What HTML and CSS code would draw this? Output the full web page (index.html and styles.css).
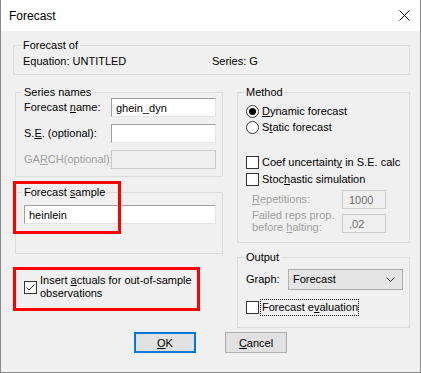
FILE: index.html
```html
<!DOCTYPE html>
<html lang="en">
<head>
    <meta charset="UTF-8">
    <title>Forecast</title>
    <link rel="stylesheet" href="styles.css">
</head>
<body>

    <div class="window">
        <div class="titlebar">
            <span class="title">Forecast</span>
            <span class="close">
                <svg width="11" height="11" viewBox="0 0 11 11"><path d="M0.5 0.5L10.5 10.5M10.5 0.5L0.5 10.5" stroke="#000" stroke-width="1"/></svg>
            </span>
        </div>

        <div class="dialog">
            <fieldset class="group group-of">
                <legend>Forecast of</legend>
                <div class="of-row">
                    <span class="of-eq">Equation: UNTITLED</span>
                    <span>Series: G</span>
                </div>
            </fieldset>

            <div class="columns">
                <div class="col">
                    <fieldset class="group names">
                        <legend>Series names</legend>
                        <div class="field">
                            <span class="field-label">Forecast <u>n</u>ame:</span>
                            <input class="edit" type="text" value="ghein_dyn">
                        </div>
                        <div class="field">
                            <span class="field-label">S.<u>E</u>. (optional):</span>
                            <input class="edit" type="text" value="">
                        </div>
                        <div class="field">
                            <span class="field-label disabled">GA<u>R</u>CH(optional):</span>
                            <input class="edit" type="text" value="" disabled>
                        </div>
                    </fieldset>

                    <fieldset class="group sample">
                        <legend>Forecast <u>s</u>ample</legend>
                        <input class="edit edit-wide" type="text" value="heinlein">
                        <span class="mark mark-sample"></span>
                    </fieldset>

                    <div class="check actuals">
                        <span class="box">
                            <svg width="11" height="11" viewBox="0 0 11 11"><path d="M1.5 5.5L4 8L9.5 2.5" fill="none" stroke="#333" stroke-width="1"/></svg>
                        </span>
                        <span>Insert <u>a</u>ctuals for out-of-sample<br>observations</span>
                        <span class="mark mark-actuals"></span>
                    </div>
                </div>

                <div class="col">
                    <fieldset class="group method">
                        <legend>Method</legend>
                        <div class="radio"><span class="dot on"></span><span><u>D</u>ynamic forecast</span></div>
                        <div class="radio"><span class="dot"></span><span>S<u>t</u>atic forecast</span></div>
                        <div class="check check-first"><span class="box"></span><span>Coef uncertaint<u>y</u> in S.E. calc</span></div>
                        <div class="check"><span class="box"></span><span>Stoc<u>h</u>astic simulation</span></div>
                        <div class="param">
                            <span class="param-label disabled"><u>R</u>epetitions:</span>
                            <input class="edit edit-small" type="text" value="1000" disabled>
                        </div>
                        <div class="param param-tall">
                            <span class="param-label disabled">Failed reps prop.<br>before <u>h</u>alting:</span>
                            <input class="edit edit-small" type="text" value=".02" disabled>
                        </div>
                    </fieldset>

                    <fieldset class="group output">
                        <legend>Output</legend>
                        <div class="graph-row">
                            <span class="graph-label">Graph:</span>
                            <div class="combo">
                                <span>Forecast</span>
                                <svg width="9" height="5" viewBox="0 0 9 5"><path d="M0.5 0.5L4.5 4.5L8.5 0.5" fill="none" stroke="#555" stroke-width="1"/></svg>
                            </div>
                        </div>
                        <div class="check check-eval"><span class="box"></span><span class="focus">Forecast e<u>v</u>aluation</span></div>
                    </fieldset>
                </div>
            </div>

            <div class="buttons">
                <button class="btn btn-default"><u>O</u>K</button>
                <button class="btn"><u>C</u>ancel</button>
            </div>
        </div>
    </div>

</body>
</html>
```

FILE: styles.css
```css
body {
    margin: 0;
    background-color: #2a2a2a;
    font-family: "Liberation Sans", Arial, sans-serif;
    font-size: 11px;
    line-height: 13px;
    color: #000;
}
u {
    text-decoration: underline;
    text-underline-offset: 1px;
}
.window {
    width: 419px;
    height: 372px;
    background: #f0f0f0;
    border: 1px solid #8a8a8a;
    border-top: none;
    box-sizing: content-box;
}
.titlebar {
    height: 31px;
    background: #fff;
    display: flex;
    align-items: center;
    justify-content: space-between;
    padding: 0 10px 0 8px;
}
.title {
    font-size: 12px;
    line-height: 16px;
}
.close {
    display: flex;
    margin-right: 0;
}
.dialog {
    padding: 8px 10px 0 12px;
}
.group {
    margin: 0;
    border: 1px solid #dcdcdc;
    min-width: 0;
}
.group legend {
    padding: 0 2px;
    margin-left: -2px;
    line-height: 12px;
}
.group-of {
    padding: 4px 8px 6px 9px;
}
.of-row {
    display: flex;
}
.of-eq {
    width: 189px;
}
.columns {
    display: grid;
    grid-template-columns: 208px 173px;
    column-gap: 14px;
    margin: 11px 0 0 2px;
    align-items: start;
}
.col {
    display: flex;
    flex-direction: column;
}
.names {
    padding: 0 6px 7px 8px;
    display: flex;
    flex-direction: column;
    gap: 7px;
}
.field {
    display: flex;
    align-items: center;
}
.field-label {
    width: 87px;
}
.disabled {
    color: #a0a0a0;
}
.edit {
    box-sizing: border-box;
    width: 105px;
    height: 19px;
    margin: 0;
    padding: 0 4px;
    font-family: inherit;
    font-size: 11px;
    color: #000;
    background: #fff;
    border: 1px solid;
    border-color: #a0a0a0 #e3e3e3 #e3e3e3 #a0a0a0;
    outline: none;
}
.edit:disabled {
    background: #f0f0f0;
    border-color: #cccccc;
    color: #6d6d6d;
}
.edit-wide {
    width: 192px;
}
.edit-small {
    width: 44px;
    padding: 0 6px;
}
.sample {
    position: relative;
    margin-top: 9px;
    padding: 7px 6px 29px 8px;
}
.mark {
    position: absolute;
    border: 3px solid #ff0000;
    box-sizing: border-box;
}
.mark-sample {
    left: -3px;
    top: -17px;
    width: 108px;
    height: 53px;
}
.actuals {
    position: relative;
    margin-top: 20px;
    padding-left: 9px;
}
.mark-actuals {
    left: -2px;
    top: -7px;
    width: 187px;
    height: 44px;
}
.check {
    display: flex;
    align-items: center;
    gap: 3px;
    min-height: 17px;
}
.box {
    width: 13px;
    height: 13px;
    box-sizing: border-box;
    border: 1px solid #333;
    background: #fff;
    display: flex;
    align-items: center;
    justify-content: center;
    flex: none;
}
.method {
    padding: 5px 6px 9px 8px;
}
.radio {
    display: flex;
    align-items: center;
    gap: 3px;
    height: 16px;
}
.dot {
    width: 13px;
    height: 13px;
    box-sizing: border-box;
    border: 1px solid #333;
    border-radius: 50%;
    background: #fff;
    display: flex;
    align-items: center;
    justify-content: center;
}
.dot.on::after {
    content: "";
    width: 7px;
    height: 7px;
    border-radius: 50%;
    background: #000;
}
.check-first {
    margin-top: 19px;
}
.param {
    display: flex;
    align-items: center;
    margin-top: 2px;
    padding-left: 6px;
}
.param-tall {
    align-items: flex-end;
    margin-top: 0;
}
.param-tall .param-label {
    line-height: 12px;
}
.param-label {
    width: 90px;
}
.output {
    margin-top: 8px;
    padding: 6px 6px 11px 8px;
}
.graph-row {
    display: flex;
    align-items: center;
}
.graph-label {
    width: 42px;
}
.combo {
    box-sizing: border-box;
    width: 115px;
    height: 21px;
    display: flex;
    align-items: center;
    justify-content: space-between;
    padding: 0 7px 0 4px;
    background: #e5e5e5;
    border: 1px solid #adadad;
}
.check-eval {
    margin-top: 9px;
}
.focus {
    outline: 1px dotted #000;
    outline-offset: 0;
    padding: 1px 0 1px 0;
    margin-left: -1px;
    padding-left: 1px;
}
.buttons {
    display: flex;
    justify-content: center;
    gap: 29px;
    margin: 4px -10px 0 -12px;
}
.btn {
    width: 62px;
    height: 21px;
    box-sizing: border-box;
    padding: 0;
    font-family: inherit;
    font-size: 11px;
    color: #000;
    background: #e1e1e1;
    border: 1px solid #adadad;
}
.btn-default {
    border: 2px solid #0078d7;
}
```
